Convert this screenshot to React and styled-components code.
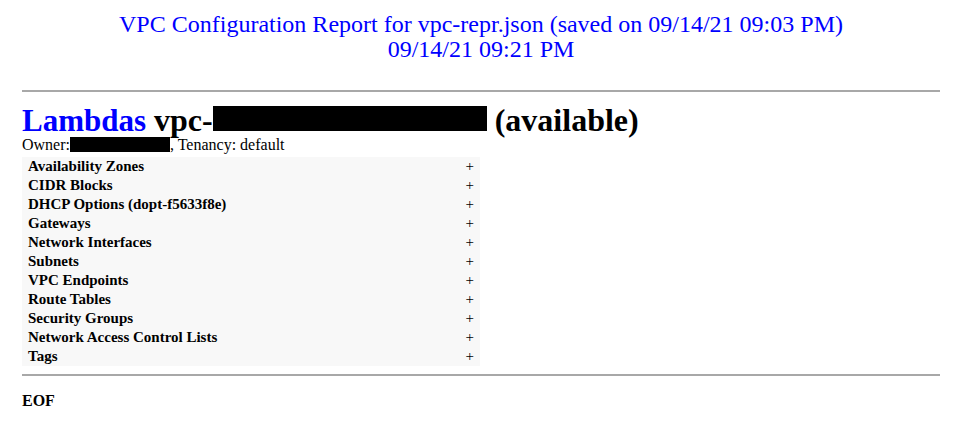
import React from 'react';
import styled, { createGlobalStyle } from 'styled-components';

const GlobalStyle = createGlobalStyle`
  body {
    margin: 0;
    background: #ffffff;
    color: #000000;
    font-family: "Liberation Serif", "Times New Roman", serif;
  }
`;

const Page = styled.div`
  padding: 12px 17px 20px 22px;
`;

const ReportTitle = styled.div`
  text-align: center;
  color: #0000ff;
  font-size: 24px;
  line-height: 25px;
  margin-bottom: 28px;
`;

const Rule = styled.hr`
  border: none;
  border-top: 2px solid #a8a8a8;
  margin: 0;
`;

const VpcHeading = styled.h1`
  font-size: 32px;
  font-weight: bold;
  line-height: 30px;
  margin: 13px 0 1px 0;
`;

const LambdaLink = styled.a`
  color: #0000ff;
  font-size: 31px;
  text-decoration: none;
`;

const Redacted = styled.span`
  display: inline-block;
  background: #000000;
  width: ${props => props.w}px;
  height: ${props => props.h}px;
  vertical-align: ${props => props.drop}px;
`;

const OwnerLine = styled.div`
  font-size: 16px;
  line-height: 16px;
`;

const SectionList = styled.div`
  width: 458px;
  background: #f8f8f8;
  margin: 4px 0 8px 0;
`;

const SectionRow = styled.div`
  display: flex;
  justify-content: space-between;
  align-items: center;
  height: 19px;
  line-height: 19px;
  padding: 0 6px;
  font-size: 15px;
  font-weight: bold;
  cursor: pointer;
`;

const Toggle = styled.span`
  font-weight: normal;
`;

const Eof = styled.div`
  font-size: 16px;
  font-weight: bold;
  margin-top: 16px;
`;

const sections = [
  'Availability Zones',
  'CIDR Blocks',
  'DHCP Options (dopt-f5633f8e)',
  'Gateways',
  'Network Interfaces',
  'Subnets',
  'VPC Endpoints',
  'Route Tables',
  'Security Groups',
  'Network Access Control Lists',
  'Tags',
];

const App = () => (
  <>
    <GlobalStyle />
    <Page>
      <ReportTitle>
        VPC Configuration Report for vpc-repr.json (saved on 09/14/21 09:03 PM)
        <br />
        09/14/21 09:21 PM
      </ReportTitle>
      <Rule />
      <VpcHeading>
        <LambdaLink href="#lambdas">Lambdas</LambdaLink> vpc-
        <Redacted w={274} h={25} drop={0} /> (available)
      </VpcHeading>
      <OwnerLine>
        Owner:<Redacted w={100} h={15} drop={-2} />, Tenancy: default
      </OwnerLine>
      <SectionList>
        {sections.map(name => (
          <SectionRow key={name}>
            <span>{name}</span>
            <Toggle>+</Toggle>
          </SectionRow>
        ))}
      </SectionList>
      <Rule />
      <Eof>EOF</Eof>
    </Page>
  </>
);

export default App;
